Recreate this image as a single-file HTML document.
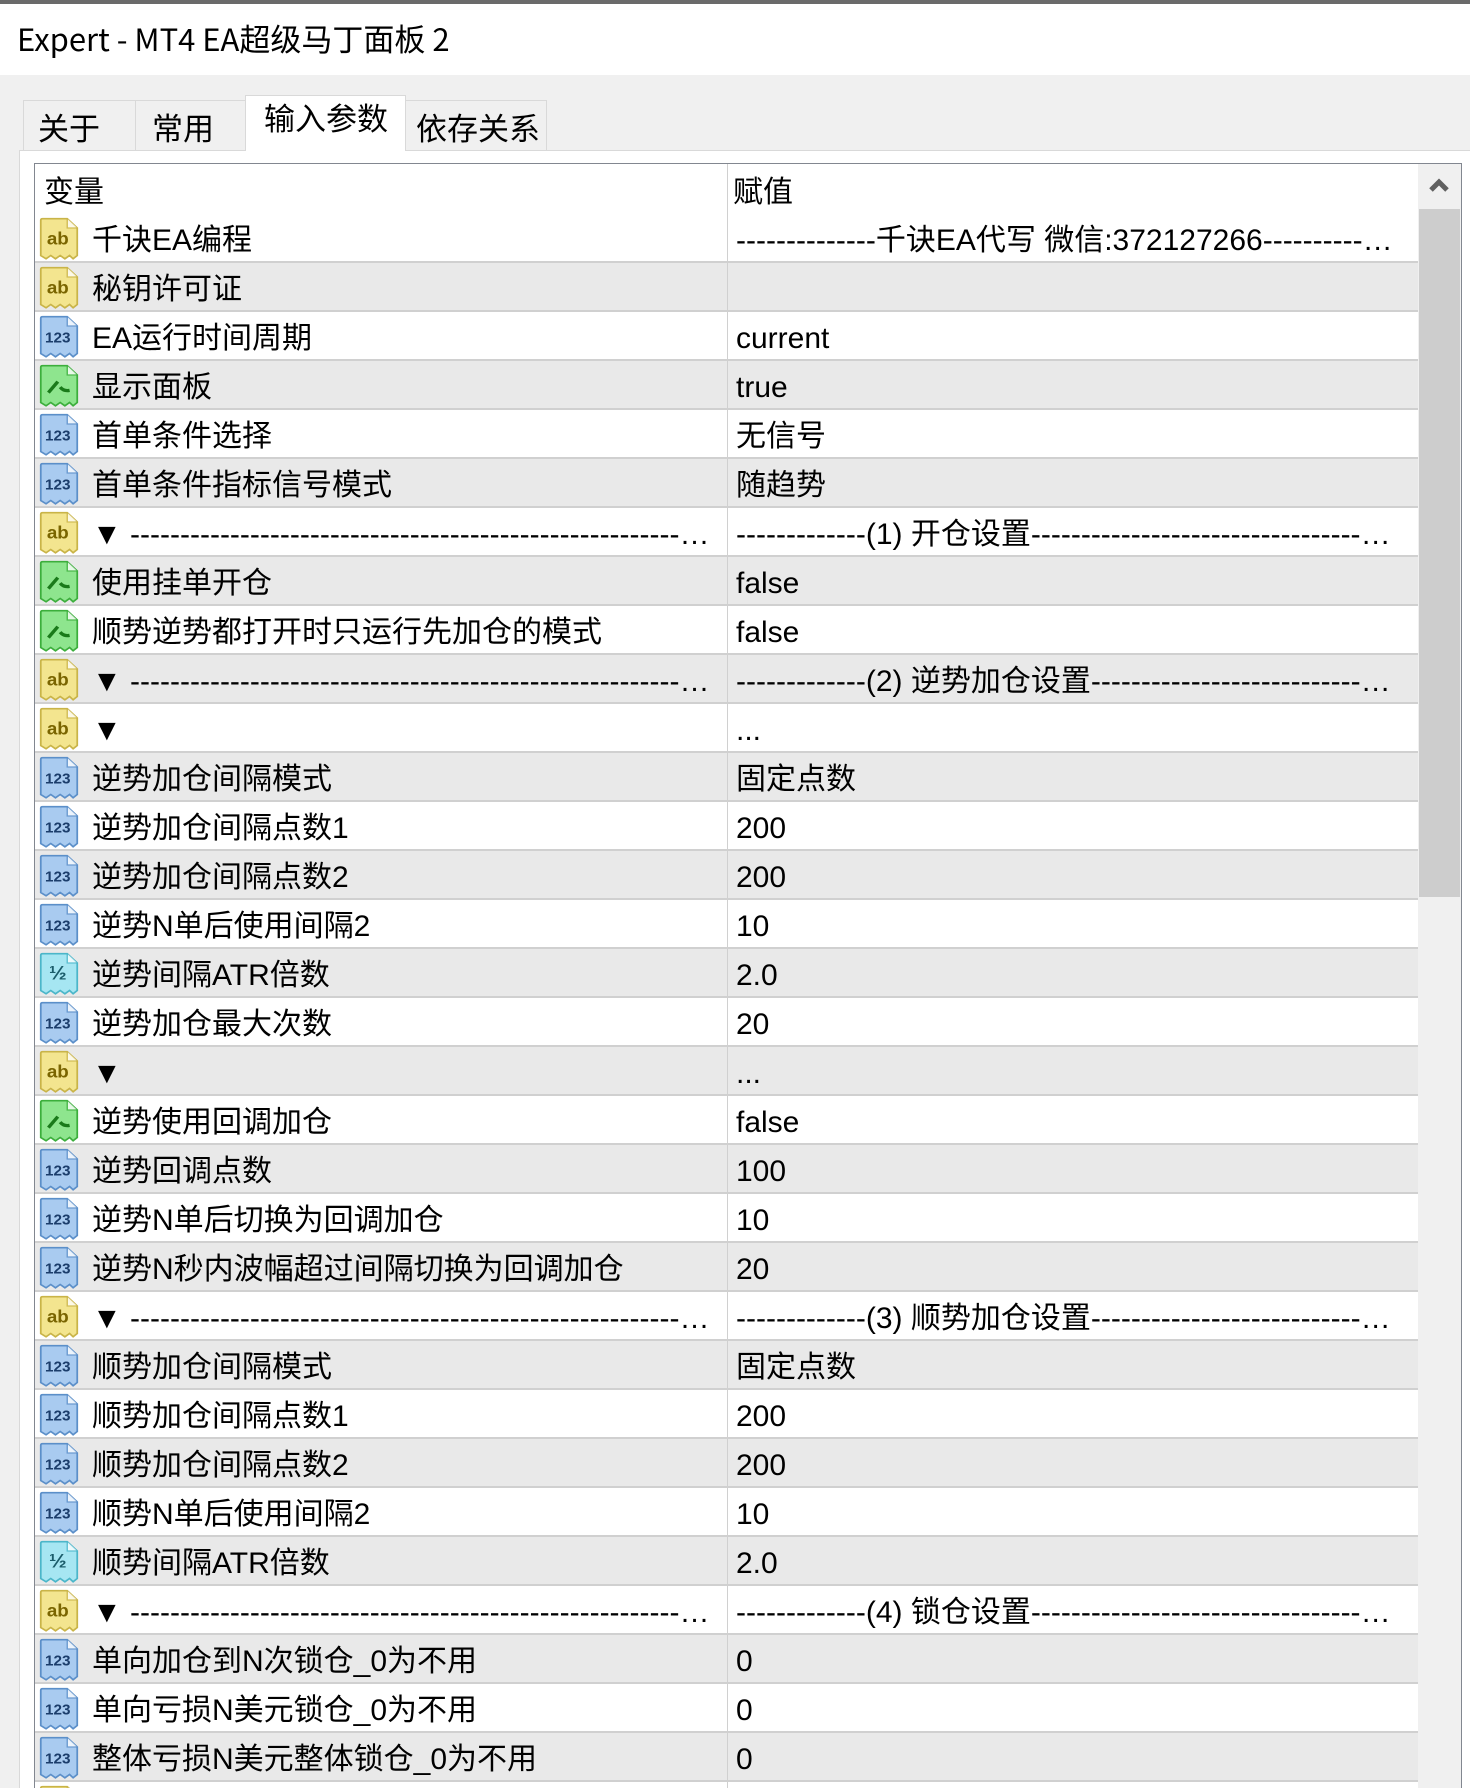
<!DOCTYPE html>
<html><head><meta charset="utf-8"><style>
*{margin:0;padding:0;box-sizing:border-box}
body{width:1470px;height:1788px;overflow:hidden;background:#f0f0f0;font-family:"Liberation Sans","Noto Sans CJK SC",sans-serif;color:#000;position:relative}
.top{position:absolute;left:0;top:0;width:1470px;height:75px;background:#fff;border-top:4px solid #6a6a6a}
.title{position:absolute;left:17px;top:15px;font-size:31px;font-family:"Noto Sans CJK SC",sans-serif;line-height:1.2}
.tab{position:absolute;top:100px;height:51px;background:#f0f0f0;border:1px solid #d9d9d9;border-bottom:none;font-size:31px;font-family:"Noto Sans CJK SC",sans-serif;padding:6px 0 0 14px;line-height:1.3;white-space:nowrap}
.tab.act{top:95px;height:56px;background:#fff;padding-top:1px;z-index:2}
.panel{position:absolute;left:19px;top:150px;width:1451px;height:1638px;background:#fff;border-top:1px solid #d9d9d9;border-left:1px solid #d9d9d9}
.list{position:absolute;left:34px;top:163px;width:1428px;height:1625px;border:1px solid #828790;border-bottom:none;background:#fff;overflow:hidden}
.hdr{position:absolute;left:0;top:0;height:50px;width:1383px;font-size:30px;font-family:"Noto Sans CJK SC",sans-serif}
.hdr span{position:absolute;top:3px}
.row{position:absolute;left:0;width:1383px;height:49px;border-bottom:2px solid #d0d0d0;font-size:30px;font-family:"Liberation Sans","Noto Sans CJK SC",sans-serif}
.row.g{background:#e9e9e9}
.n{position:absolute;left:57px;top:7px;width:627px;white-space:nowrap;overflow:hidden;text-overflow:ellipsis;line-height:40px}
.v{position:absolute;left:701px;top:7px;width:660px;white-space:nowrap;overflow:hidden;text-overflow:ellipsis;line-height:40px}
.col{position:absolute;left:692px;top:0;width:1px;height:1625px;background:#d0d0d0}
.ic{position:absolute;left:4px;top:3px}
.sb{position:absolute;left:1383px;top:0;width:43px;height:1625px;background:#f0f0f0}
.th{position:absolute;left:1px;top:45px;width:41px;height:688px;background:#cdcdcd}
</style></head><body>
<div class="top"><div class="title">Expert - MT4 EA超级马丁面板 2</div></div>
<div class="tab" style="left:23px;width:113px">关于</div>
<div class="tab" style="left:135px;width:111px;padding-left:16px">常用</div>
<div class="tab act" style="left:245px;width:161px;padding-left:18px">输入参数</div>
<div class="tab" style="left:405px;width:142px;padding-left:10px">依存关系</div>
<div class="panel"></div>
<div class="list">
<div class="hdr"><span style="left:9px">变量</span><span style="left:698px">赋值</span></div>
<div id="rows"></div>
<div class="col"></div>
<div class="sb"><svg width="43" height="45" style="position:absolute;left:0;top:0"><path d="M13 26 L21 18 L29 26" stroke="#606060" stroke-width="5" fill="none"/></svg><div class="th"></div></div>
</div>
<script>
var ic={
ab:['#f3e58f','#c9b448','ab','#7a6500'],
n:['#a9cbf0','#5b8fc9','123','#1b3d6b'],
b:['#8ee58e','#3cae3c','',''],
h:['#a6e6f2','#4bb6c9','½','#1b5d6b']};
function icon(t){var c=ic[t];var s='<svg class="ic" width="40" height="44" viewBox="0 0 34 40" preserveAspectRatio="none"><path d="M1.5 3 Q1.5 1.5 3 1.5 L24 1.5 L32.5 10 L32.5 35 L29 38 L26 35 L22 38 L18 35 L14 38 L10 35 L6 38 L1.5 35 Z" fill="'+c[0]+'" stroke="'+c[1]+'" stroke-width="1.5"/><path d="M24 1.5 L24 10 L32.5 10" fill="#fff" stroke="'+c[1]+'" stroke-width="1.2" opacity=".8"/>';
if(t=='b')s+='<path d="M8 26 L16 16 M18 21 Q21 25 26 24" stroke="#1a7a1a" stroke-width="3" fill="none"/>';
else s+='<text x="16" y="25" text-anchor="middle" font-family="Liberation Sans,sans-serif" font-weight="bold" font-size="'+(t=='ab'?16:(t=='h'?18:13))+'" fill="'+c[3]+'">'+c[2]+'</text>';
return s+'</svg>';}
var D='------------------------------------------------------------------------------------------';
var R=[['ab','千诀EA编程','--------------千诀EA代写 微信:372127266'+D],
['ab','秘钥许可证',''],['n','EA运行时间周期','current'],['b','显示面板','true'],['n','首单条件选择','无信号'],['n','首单条件指标信号模式','随趋势'],
['ab','▼ '+D,'-------------(1) 开仓设置'+D],['b','使用挂单开仓','false'],['b','顺势逆势都打开时只运行先加仓的模式','false'],
['ab','▼ '+D,'-------------(2) 逆势加仓设置'+D],['ab','▼','...'],['n','逆势加仓间隔模式','固定点数'],['n','逆势加仓间隔点数1','200'],['n','逆势加仓间隔点数2','200'],['n','逆势N单后使用间隔2','10'],['h','逆势间隔ATR倍数','2.0'],['n','逆势加仓最大次数','20'],
['ab','▼','...'],['b','逆势使用回调加仓','false'],['n','逆势回调点数','100'],['n','逆势N单后切换为回调加仓','10'],['n','逆势N秒内波幅超过间隔切换为回调加仓','20'],
['ab','▼ '+D,'-------------(3) 顺势加仓设置'+D],['n','顺势加仓间隔模式','固定点数'],['n','顺势加仓间隔点数1','200'],['n','顺势加仓间隔点数2','200'],['n','顺势N单后使用间隔2','10'],['h','顺势间隔ATR倍数','2.0'],
['ab','▼ '+D,'-------------(4) 锁仓设置'+D],['n','单向加仓到N次锁仓_0为不用','0'],['n','单向亏损N美元锁仓_0为不用','0'],['n','整体亏损N美元整体锁仓_0为不用','0'],['ab','','']];
var h='';R.forEach(function(r,i){h+='<div class="row'+(i%2?' g':'')+'" style="top:'+(50+i*49)+'px">'+icon(r[0])+'<div class="n">'+r[1]+'</div><div class="v">'+r[2]+'</div></div>';});
document.getElementById('rows').innerHTML=h;
</script>
</body></html>
